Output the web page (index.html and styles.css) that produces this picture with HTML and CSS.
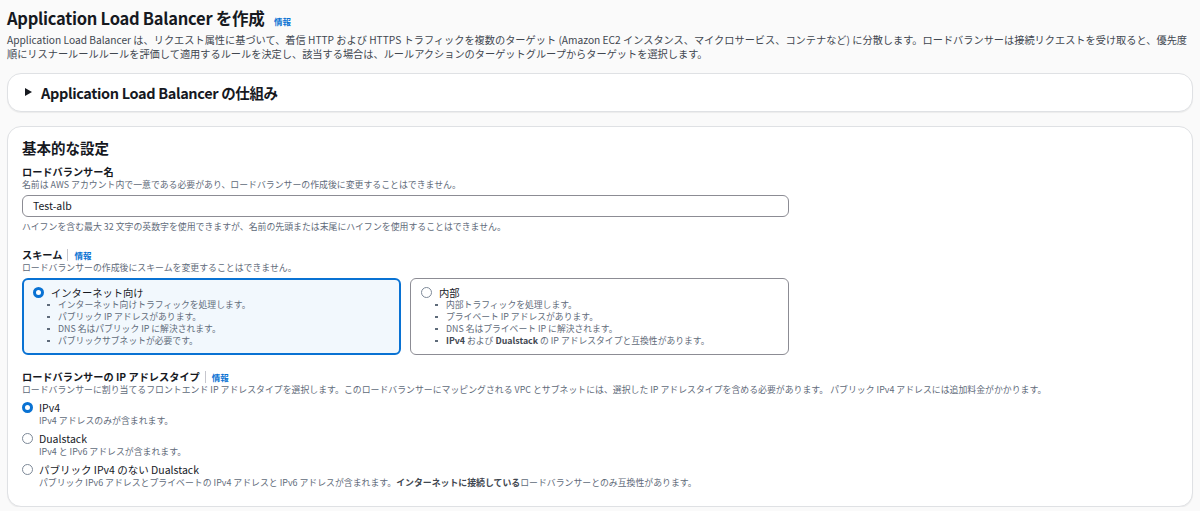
FILE: index.html
```html
<!DOCTYPE html>
<html lang="ja">
<head>
    <meta charset="utf-8">
    <link rel="stylesheet" href="styles.css">
</head>
<body>
    <div class="page">
        <div class="page-head">
            <h1>Application Load Balancer を作成 <a class="info" href="#">情報</a></h1>
            <p class="lead">Application Load Balancer は、リクエスト属性に基づいて、着信 HTTP および HTTPS トラフィックを複数のターゲット (Amazon EC2 インスタンス、マイクロサービス、コンテナなど) に分散します。ロードバランサーは接続リクエストを受け取ると、優先度順にリスナールールルールを評価して適用するルールを決定し、該当する場合は、ルールアクションのターゲットグループからターゲットを選択します。</p>
        </div>

        <div class="panel expander">
            <span class="caret"></span>
            <span>Application Load Balancer の仕組み</span>
        </div>

        <div class="panel settings">
            <h2>基本的な設定</h2>
            <div class="fields">
                <div class="field">
                    <div class="label">ロードバランサー名</div>
                    <div class="desc">名前は AWS アカウント内で一意である必要があり、ロードバランサーの作成後に変更することはできません。</div>
                    <div class="input">Test-alb</div>
                    <div class="hint">ハイフンを含む最大 32 文字の英数字を使用できますが、名前の先頭または末尾にハイフンを使用することはできません。</div>
                </div>

                <div class="field">
                    <div class="label">スキーム <span class="sep"></span><a class="info" href="#">情報</a></div>
                    <div class="desc">ロードバランサーの作成後にスキームを変更することはできません。</div>
                    <div class="tiles">
                        <div class="tile selected">
                            <div class="tile-title"><span class="radio on"></span>インターネット向け</div>
                            <ul>
                                <li>インターネット向けトラフィックを処理します。</li>
                                <li>パブリック IP アドレスがあります。</li>
                                <li>DNS 名はパブリック IP に解決されます。</li>
                                <li>パブリックサブネットが必要です。</li>
                            </ul>
                        </div>
                        <div class="tile">
                            <div class="tile-title"><span class="radio"></span>内部</div>
                            <ul>
                                <li>内部トラフィックを処理します。</li>
                                <li>プライベート IP アドレスがあります。</li>
                                <li>DNS 名はプライベート IP に解決されます。</li>
                                <li><b>IPv4</b> および <b>Dualstack</b> の IP アドレスタイプと互換性があります。</li>
                            </ul>
                        </div>
                    </div>
                </div>
            </div>

            <div class="field wide">
                <div class="label">ロードバランサーの IP アドレスタイプ <span class="sep"></span><a class="info" href="#">情報</a></div>
                <div class="desc">ロードバランサーに割り当てるフロントエンド IP アドレスタイプを選択します。このロードバランサーにマッピングされる VPC とサブネットには、選択した IP アドレスタイプを含める必要があります。 パブリック IPv4 アドレスには追加料金がかかります。</div>
                <div class="option">
                    <span class="radio on"></span>
                    <div>
                        <div class="opt-name">IPv4</div>
                        <div class="desc">IPv4 アドレスのみが含まれます。</div>
                    </div>
                </div>
                <div class="option">
                    <span class="radio"></span>
                    <div>
                        <div class="opt-name">Dualstack</div>
                        <div class="desc">IPv4 と IPv6 アドレスが含まれます。</div>
                    </div>
                </div>
                <div class="option">
                    <span class="radio"></span>
                    <div>
                        <div class="opt-name">パブリック IPv4 のない Dualstack</div>
                        <div class="desc">パブリック IPv6 アドレスとプライベートの IPv4 アドレスと IPv6 アドレスが含まれます。<b>インターネットに接続している</b>ロードバランサーとのみ互換性があります。</div>
                    </div>
                </div>
            </div>
        </div>
    </div>
</body>
</html>
```

FILE: styles.css
```css
body {
    margin: 0;
    background-color: #fafafa;
    color: #16191f;
    font-family: "Noto Sans CJK JP", sans-serif;
}
.page {
    padding: 6px 7px 0 7px;
}
h1 {
    margin: 0;
    font-size: 16.5px;
    line-height: 24px;
    font-weight: 700;
    letter-spacing: -0.25px;
}
.info {
    color: #0972d3;
    font-size: 8.5px;
    font-weight: 700;
    letter-spacing: 0;
    text-decoration: none;
    vertical-align: middle;
}
h1 .info {
    margin-left: 6px;
}
.lead {
    margin: 0;
    font-size: 10.2px;
    line-height: 14px;
    color: #414750;
}
.panel {
    background-color: white;
    border: 1px solid #dfe1e4;
    border-radius: 14px;
    box-shadow: 0 1px 1px rgba(0, 0, 0, 0.06);
}
.expander {
    margin-top: 12px;
    height: 37px;
    display: flex;
    align-items: center;
    gap: 9px;
    padding-left: 17px;
    font-size: 14.5px;
    font-weight: 700;
    letter-spacing: -0.35px;
}
.caret {
    width: 0;
    height: 0;
    border-style: solid;
    border-width: 4.5px 0 4.5px 7px;
    border-color: transparent transparent transparent #16191f;
}
.settings {
    margin-top: 14px;
    padding: 11px 14px 17px 14px;
}
h2 {
    margin: 0;
    font-size: 14.5px;
    line-height: 20px;
    font-weight: 700;
}
.fields {
    width: 767px;
}
.field {
    margin-top: 15px;
}
.field:first-child {
    margin-top: 7px;
}
.wide {
    margin-top: 15px;
}
.label {
    font-size: 10.2px;
    line-height: 14px;
    font-weight: 700;
    display: flex;
    align-items: center;
}
.sep {
    display: inline-block;
    width: 1px;
    height: 12px;
    background-color: #c6c6cd;
    margin: 0 6px 0 5px;
}
.desc, .hint {
    font-size: 8.9px;
    line-height: 12px;
    color: #5f6b7a;
}
.input {
    margin-top: 4px;
    height: 20px;
    border: 1px solid #8c8c94;
    border-radius: 6px;
    padding-left: 10px;
    font-size: 10.5px;
    line-height: 20px;
}
.hint {
    margin-top: 4px;
}
.tiles {
    margin-top: 4px;
    display: grid;
    grid-template-columns: 1fr 1fr;
    gap: 9px;
}
.tile {
    border: 1px solid #8c8c94;
    border-radius: 6px;
    padding: 7px 10px;
    box-sizing: border-box;
    height: 77px;
}
.tile.selected {
    border: 2px solid #0972d3;
    background-color: #f2f8fd;
    padding: 6px 9px;
}
.tile-title {
    display: flex;
    align-items: center;
    gap: 7px;
    font-size: 10.3px;
    line-height: 13px;
}
.tile ul {
    margin: 0;
    padding-left: 25px;
    list-style: none;
}
.tile li {
    position: relative;
    font-size: 8.8px;
    line-height: 12px;
    color: #5f6b7a;
}
.tile li::before {
    content: '';
    position: absolute;
    left: -11px;
    top: 5px;
    width: 2.5px;
    height: 2.5px;
    background-color: #5f6b7a;
}
.tile li b, .desc b {
    color: #414750;
}
.radio {
    flex: none;
    box-sizing: border-box;
    width: 11px;
    height: 11px;
    border-radius: 50%;
    border: 1px solid #7d8998;
    background-color: white;
}
.radio.on {
    border: 3.5px solid #0972d3;
}
.option {
    margin-top: 5px;
    display: flex;
    gap: 6px;
}
.option .radio {
    margin-top: 1.5px;
}
.opt-name {
    font-size: 10.5px;
    line-height: 14px;
}
```
